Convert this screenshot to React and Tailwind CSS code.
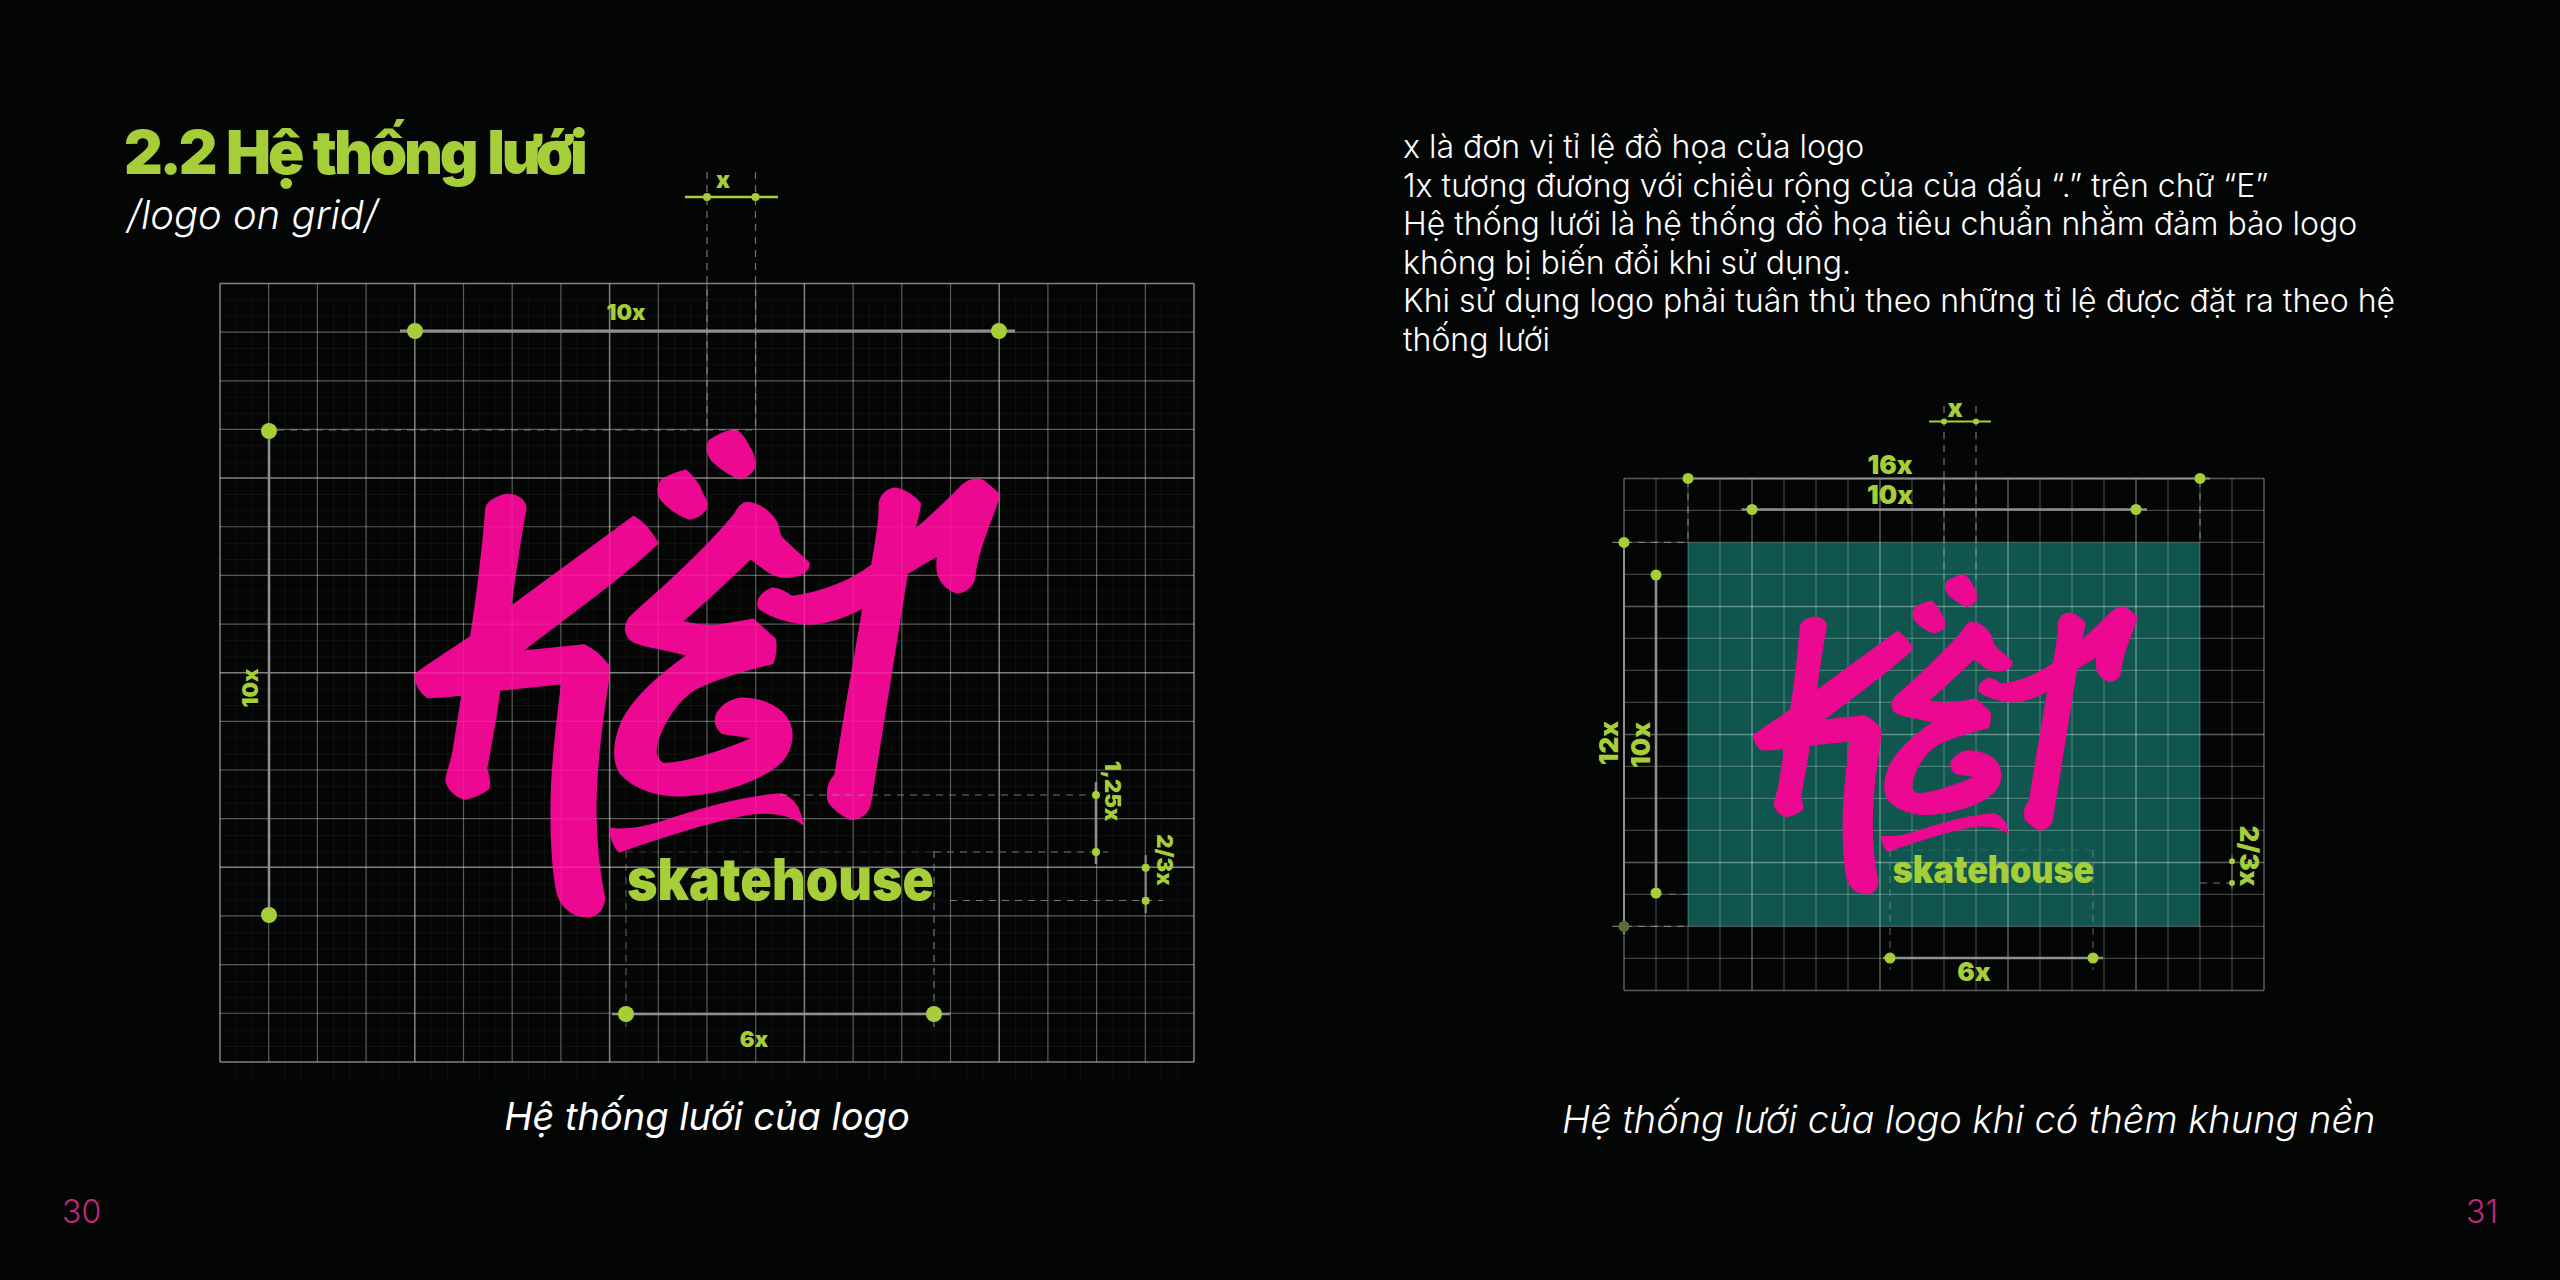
import React from 'react';

const GREEN = '#a6ce39';
const PINK = '#ec0890';
const range = n => Array.from({ length: n }, (_, i) => i);

// logo outlines traced in a 1568x1560 box
const LOGO_PATHS = [
  // K
  'M245 325 C248 300 285 280 305 285 C325 290 338 310 335 330 C328 370 320 440 300 622 L585 350 C605 365 625 395 640 430 C560 530 440 640 325 755 L470 735 C495 750 515 775 528 800 C530 840 500 1000 497 1200 C495 1320 505 1420 517 1495 C515 1520 505 1545 480 1550 C450 1550 425 1530 412 1490 C400 1440 392 1300 397 1150 C402 1030 412 930 420 850 L275 870 C268 950 255 1030 245 1105 C250 1130 255 1150 250 1165 C235 1180 215 1192 195 1197 C175 1190 155 1165 153 1140 C155 1115 165 1090 170 1050 L190 885 C160 888 135 892 110 892 C95 880 85 860 80 825 C115 790 165 750 210 710 C225 590 240 420 245 325 Z',
  // dots
  'M760 122 C775 108 795 96 815 90 C830 92 840 115 850 140 C858 155 866 175 862 205 C855 220 845 232 830 235 C810 228 780 200 765 180 C755 160 752 140 760 122 Z',
  'M650 240 C665 228 685 218 705 211 C722 230 738 260 742 280 C750 295 755 310 752 325 C745 340 730 352 715 357 C695 350 665 325 648 298 C638 278 642 255 650 240 Z',
  // E
  'M845 308 C875 310 900 335 915 370 C918 385 920 400 925 412 C945 440 970 465 988 488 C990 510 975 525 950 530 C925 535 905 525 890 510 L855 475 C810 530 755 600 695 665 C725 675 760 680 785 675 C810 670 835 665 860 658 C880 680 895 700 910 716 C915 740 910 770 905 790 C860 805 780 830 725 868 C685 900 650 970 638 1030 C632 1060 638 1080 652 1090 C690 1095 780 1060 860 1015 C835 1005 805 1005 790 1000 C775 985 770 960 778 940 C790 915 810 898 835 895 C875 895 915 915 935 950 C955 985 955 1040 925 1085 C880 1140 790 1180 700 1187 C640 1190 585 1165 555 1120 C535 1080 540 1020 560 960 C590 885 650 820 710 765 C670 750 610 740 585 725 C565 710 562 680 575 655 C585 640 600 625 612 610 C690 520 770 420 820 340 C825 325 835 310 845 308 Z',
  // swoosh
  'M530 1285 C560 1292 600 1285 640 1270 C720 1235 830 1190 925 1182 C945 1190 962 1215 968 1240 L975 1272 C950 1245 900 1230 840 1245 C760 1265 640 1315 552 1355 C540 1340 532 1310 530 1285 Z',
  // T
  'M1152 310 C1155 285 1170 265 1190 265 C1210 270 1232 290 1245 310 C1245 335 1235 365 1232 392 C1270 350 1310 300 1340 260 C1355 240 1375 232 1392 243 C1405 260 1420 272 1428 285 C1415 340 1395 395 1380 465 C1372 500 1372 525 1368 545 C1360 565 1345 578 1330 578 C1310 570 1295 550 1288 525 C1283 505 1285 485 1287 465 L1215 520 C1195 700 1160 960 1130 1210 C1125 1240 1110 1255 1085 1258 C1065 1245 1045 1225 1035 1205 C1030 1175 1035 1145 1050 1125 C1070 960 1095 770 1115 622 C1075 650 1030 670 990 672 C945 670 900 650 875 625 C868 605 875 580 905 565 C925 565 940 582 950 590 C1015 580 1085 545 1135 495 C1145 420 1155 350 1152 310 Z',
];

function Logo({ transform }) {
  return (
    <g transform={transform}>
      <g transform="translate(380 400) scale(0.43367 0.33333)" fill={PINK} stroke={PINK} strokeWidth="5" strokeLinejoin="round">
        {LOGO_PATHS.map((d, i) => <path key={i} d={d} />)}
      </g>
      <text x="627" y="900" textLength="307" lengthAdjust="spacingAndGlyphs" fill={GREEN} className="text-[58px] font-black font-['Inter',sans-serif]">skatehouse</text>
    </g>
  );
}

function Grid({ x, y, pitchX, pitchY, cols, rows, minor, major }) {
  return (
    <g>
      {range(cols + 1).map(i => (
        <line key={i} x1={x + i * pitchX} x2={x + i * pitchX} y1={y} y2={y + rows * pitchY}
          stroke="#fff" strokeOpacity={i % 4 === 0 ? major : minor} strokeWidth={i % 4 === 0 ? 1.5 : 1.2} />
      ))}
      {range(rows + 1).map(i => (
        <line key={i} y1={y + i * pitchY} y2={y + i * pitchY} x1={x} x2={x + cols * pitchX}
          stroke="#fff" strokeOpacity={i % 4 === 0 ? major : minor} strokeWidth={i % 4 === 0 ? 1.5 : 1.2} />
      ))}
    </g>
  );
}

function FineGrid({ x, y, pitch, cols, rows }) {
  return (
    <g stroke="#fff" strokeOpacity="0.05" strokeWidth="1">
      {range(cols * 3).filter(i => i % 3 !== 0).map(i => (
        <line key={i} x1={x + (i * pitch) / 3} x2={x + (i * pitch) / 3} y1={y + 17} y2={y + rows * pitch + 18} />
      ))}
      {range(rows * 3).filter(i => i % 3 !== 0).map(i => (
        <line key={i} y1={y + (i * pitch) / 3} y2={y + (i * pitch) / 3} x1={x} x2={x + cols * pitch} />
      ))}
    </g>
  );
}

const Dot = ({ x, y, r = 8, fill = GREEN }) => <circle cx={x} cy={y} r={r} fill={fill} />;

const Bar = ({ x1, y1, x2, y2, w = 2.5, color = '#8f8f8f' }) => (
  <line x1={x1} y1={y1} x2={x2} y2={y2} stroke={color} strokeWidth={w} />
);

const Dash = ({ x1, y1, x2, y2, o = 0.7 }) => (
  <line x1={x1} y1={y1} x2={x2} y2={y2} stroke="#a0a0a0" strokeOpacity={o} strokeWidth="1.2" strokeDasharray="7 6" />
);

function Label({ x, y, rotate = 0, size = 22, children }) {
  return (
    <text x={x} y={y} transform={rotate ? `rotate(${rotate} ${x} ${y})` : undefined} textAnchor="middle" dominantBaseline="central"
      fill={GREEN} fontSize={size} className="font-black font-['Inter',sans-serif]">
      {children}
    </text>
  );
}

function LeftDiagram() {
  return (
    <svg width="1000" height="930" viewBox="200 160 1000 930" className="block overflow-visible">
      <FineGrid x={220} y={283.5} pitch={48.7} cols={20} rows={16} />
      <Grid x={220} y={283.5} pitchX={48.7} pitchY={48.65} cols={20} rows={16} minor={0.28} major={0.42} />
      <Logo />
      <g opacity="0.14"><Grid x={220} y={283.5} pitchX={48.7} pitchY={48.65} cols={20} rows={16} minor={0.6} major={0.8} /></g>

      <Dash x1={707} y1={172} x2={707} y2={430} />
      <Dash x1={755.5} y1={172} x2={755.5} y2={430} />
      <Bar x1={685} y1={197} x2={778} y2={197} color={GREEN} w={2.5} />
      <Dot x={707} y={197} r={4} />
      <Dot x={755.5} y={197} r={4} />
      <Label x={723} y={180} size={23}>x</Label>

      <Bar x1={400} y1={331} x2={1015} y2={331} w={3} />
      <Dot x={415} y={331} />
      <Dot x={999} y={331} />
      <Label x={626} y={312}>10x</Label>

      <Dash x1={277} y1={430} x2={755} y2={430} />
      <Bar x1={269} y1={430} x2={269} y2={915} w={2.5} />
      <Dot x={269} y={431} />
      <Dot x={269} y={915} />
      <Label x={250} y={688} rotate={-90}>10x</Label>

      <Dash x1={626} y1={851} x2={626} y2={1032} o={0.5} />
      <Dash x1={934} y1={851} x2={934} y2={1032} />
      <Bar x1={612} y1={1014} x2={950} y2={1014} w={2.5} />
      <Dot x={626} y={1014} />
      <Dot x={934} y={1014} />
      <Label x={754} y={1039}>6x</Label>

      <Dash x1={780} y1={795} x2={1096} y2={795} />
      <Dash x1={626} y1={852} x2={934} y2={852} o={0.25} />
      <Dash x1={934} y1={852} x2={1108} y2={852} />
      <Bar x1={1096} y1={782} x2={1096} y2={864} />
      <Dot x={1096} y={795} r={4} />
      <Dot x={1096} y={852} r={4} />
      <Label x={1113} y={791} rotate={90}>1,25x</Label>

      <Dash x1={950} y1={900.5} x2={1163} y2={900.5} />
      <Bar x1={1145.7} y1={855} x2={1145.7} y2={913} w={2} />
      <Dot x={1145.7} y={867.7} r={4} />
      <Dot x={1145.7} y={900.7} r={4} />
      <Label x={1165} y={860} rotate={90}>2/3x</Label>
    </svg>
  );
}

function RightDiagram() {
  return (
    <svg width="700" height="605" viewBox="1590 395 700 605" className="block overflow-visible">
      <rect x="1688" y="542.4" width="512" height="384" fill="#10554e" />
      <Grid x={1624} y={478.4} pitchX={32} pitchY={32} cols={20} rows={16} minor={0.24} major={0.34} />
      <Logo transform="translate(1481.5 292.6) scale(0.656)" />

      <Dash x1={1944} y1={406} x2={1944} y2={579} />
      <Dash x1={1976} y1={406} x2={1976} y2={579} />
      <Bar x1={1929} y1={421.5} x2={1991} y2={421.5} color={GREEN} w={2} />
      <Dot x={1944} y={421.5} r={3} />
      <Dot x={1976} y={421.5} r={3} />
      <Label x={1955} y={408} size={25}>x</Label>

      <Dash x1={1688} y1={480} x2={1688} y2={542} />
      <Dash x1={2200} y1={480} x2={2200} y2={542} />
      <Bar x1={1683} y1={478.4} x2={2210} y2={478.4} w={2} />
      <Dot x={1688} y={478.4} r={5.5} />
      <Dot x={2200} y={478.4} r={5.5} />
      <Label x={1890} y={464} size={26}>16x</Label>

      <Bar x1={1741.6} y1={509.5} x2={2147} y2={509.5} />
      <Dot x={1752} y={509.5} r={5.5} />
      <Dot x={2136} y={509.5} r={5.5} />
      <Label x={1890} y={494} size={26}>10x</Label>

      <Dash x1={1612} y1={542.4} x2={1688} y2={542.4} />
      <Dash x1={1612} y1={926.4} x2={1688} y2={926.4} />
      <Bar x1={1624} y1={542} x2={1624} y2={934} w={2} />
      <Dot x={1624} y={542.4} r={5.5} />
      <Dot x={1624} y={926.4} r={5.5} fill="#5b6e3a" />
      <Label x={1608.5} y={743} size={26} rotate={-90}>12x</Label>

      <Dash x1={1656} y1={894.4} x2={1688} y2={894.4} o={0.5} />
      <Bar x1={1656} y1={574.4} x2={1656} y2={894.4} />
      <Dot x={1656} y={575} r={5.5} />
      <Dot x={1656} y={893} r={5.5} />
      <Label x={1640} y={745} size={26} rotate={-90}>10x</Label>

      <Dash x1={1890} y1={850} x2={2093} y2={850} o={0.25} />
      <Dash x1={1890} y1={850} x2={1890} y2={970} o={0.5} />
      <Dash x1={2093} y1={850} x2={2093} y2={970} o={0.5} />
      <Bar x1={1883} y1={958} x2={2103} y2={958} />
      <Dot x={1890} y={958} r={5.5} />
      <Dot x={2093} y={958} r={5.5} />
      <Label x={1974} y={971} size={26}>6x</Label>

      <Dash x1={2200} y1={883} x2={2232} y2={883} />
      <Bar x1={2232} y1={855} x2={2232} y2={889} w={1.5} color="#666" />
      <Dot x={2232} y={861.3} r={3} />
      <Dot x={2232} y={883} r={3} />
      <Label x={2249.4} y={856} size={26} rotate={90}>2/3x</Label>
    </svg>
  );
}

export default function App() {
  return (
    <div className="w-[2560px] h-[1280px] bg-[#040606] flex overflow-hidden text-white font-['Inter',sans-serif]">
      {/* page 30 */}
      <div className="w-[1280px] pl-[62px] pt-[120px]">
        <h1 className="ml-[62px] text-[60px] leading-[64px] font-black tracking-[-3.2px] [word-spacing:3px] text-[#a6ce39]">2.2 Hệ thống lưới</h1>
        <p className="ml-[65px] mt-[9px] text-[40px] leading-[44px] font-light italic">/logo on grid/</p>
        <div className="ml-[138px] -mt-[77px]">
          <LeftDiagram />
        </div>
        <p className="ml-[158px] mt-[3px] w-[974px] text-center text-[38px] leading-[46px] font-normal italic">Hệ thống lưới của logo</p>
        <p className="mt-[54px] text-[32px] leading-[38px] font-light text-[#c02a78]">30</p>
      </div>

      {/* page 31 */}
      <div className="w-[1280px] pl-[123px] pr-[62px] pt-[128px]">
        <div className="text-[32px] leading-[38.6px] font-light">
          <p>x là đơn vị tỉ lệ đồ họa của logo</p>
          <p>1x tương đương với chiều rộng của của dấu “.” trên chữ “E”</p>
          <p>Hệ thống lưới là hệ thống đồ họa tiêu chuẩn nhằm đảm bảo logo</p>
          <p>không bị biến đổi khi sử dụng.</p>
          <p>Khi sử dụng logo phải tuân thủ theo những tỉ lệ được đặt ra theo hệ</p>
          <p>thống lưới</p>
        </div>
        <div className="ml-[187px] mt-[35px]">
          <RightDiagram />
        </div>
        <p className="mt-[96px] ml-[159px] text-[38px] leading-[46px] font-light italic">Hệ thống lưới của logo khi có thêm khung nền</p>
        <p className="mt-[51px] text-right text-[32px] leading-[38px] font-light text-[#c02a78]">31</p>
      </div>
    </div>
  );
}
